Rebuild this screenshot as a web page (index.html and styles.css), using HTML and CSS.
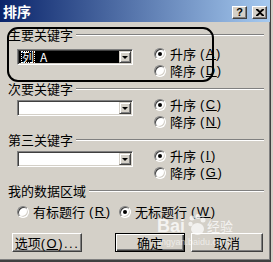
FILE: index.html
```html
<!DOCTYPE html>
<html lang="zh-CN">
<head>
    <meta charset="UTF-8">
    <title>排序</title>
    <link rel="stylesheet" href="styles.css">
</head>
<body>
    <div class="window">
        <div class="titlebar">
            <span class="title">排序</span>
            <div class="title-buttons">
                <span class="tbtn help">?</span>
                <span class="tbtn">
                    <svg width="8" height="7" viewBox="0 0 8 7"><path d="M0 0h2l2 2 2-2h2v1L5 3.5 8 6v1H6L4 5 2 7H0V6l3-2.5L0 1z" fill="#000"/></svg>
                </span>
            </div>
        </div>

        <div class="content">
            <div class="section first">
                <div class="head"><span>主要关键字</span><i class="line"></i></div>
                <div class="body">
                    <div class="combo selected">
                        <div class="field"><span class="focus">列</span>A</div>
                        <div class="drop"></div>
                    </div>
                    <div class="radios">
                        <div class="opt"><span class="radio checked"></span>升序<span class="key">(<u>A</u>)</span></div>
                        <div class="opt"><span class="radio"></span>降序<span class="key">(<u>D</u>)</span></div>
                    </div>
                </div>
            </div>

            <div class="section">
                <div class="head"><span>次要关键字</span><i class="line"></i></div>
                <div class="body">
                    <div class="combo">
                        <div class="field"></div>
                        <div class="drop"></div>
                    </div>
                    <div class="radios">
                        <div class="opt"><span class="radio checked"></span>升序<span class="key">(<u>C</u>)</span></div>
                        <div class="opt"><span class="radio"></span>降序<span class="key">(<u>N</u>)</span></div>
                    </div>
                </div>
            </div>

            <div class="section">
                <div class="head"><span>第三关键字</span><i class="line"></i></div>
                <div class="body">
                    <div class="combo">
                        <div class="field"></div>
                        <div class="drop"></div>
                    </div>
                    <div class="radios">
                        <div class="opt"><span class="radio checked"></span>升序<span class="key">(<u>I</u>)</span></div>
                        <div class="opt"><span class="radio"></span>降序<span class="key">(<u>G</u>)</span></div>
                    </div>
                </div>
            </div>

            <div class="section data">
                <div class="head"><span>我的数据区域</span><i class="line"></i></div>
                <div class="data-opts">
                    <div class="opt"><span class="radio"></span>有标题行<span class="key">(<u>R</u>)</span></div>
                    <div class="opt"><span class="radio checked"></span>无标题行<span class="key">(<u>W</u>)</span></div>
                </div>
            </div>

            <div class="actions">
                <button class="btn">选项<span class="key">(<u>O</u>)...</span></button>
                <button class="btn default">确定</button>
                <button class="btn">取消</button>
            </div>
        </div>

        <!-- hand-drawn ring around the first key -->
        <div class="ring"></div>

        <div class="mark">
            <span class="bai">Bai</span>
            <svg class="paw" width="18" height="22" viewBox="0 0 18 22">
                <circle cx="4" cy="4" r="2.5"/><circle cx="10" cy="2.5" r="2.5"/><circle cx="15" cy="6" r="2.5"/>
                <circle cx="2.5" cy="10" r="2.2"/><ellipse cx="9.5" cy="15" rx="6.5" ry="6"/>
            </svg>
            <span class="jy">经验</span>
            <span class="url">jingyan.baidu.com</span>
        </div>
    </div>
</body>
</html>
```

FILE: styles.css
```css
* { box-sizing: border-box; }
body { margin: 0; background: #d4d0c8; font-family: "Noto Sans CJK SC", sans-serif; font-size: 13px; color: #000; }

.window { position: relative; width: 271px; height: 262px; background: #d4d0c8; border-right: 1px solid #404040; border-bottom: 2px solid #404040; box-shadow: inset -1px -1px #808080; overflow: hidden; }

.titlebar { display: flex; justify-content: space-between; height: 22px; padding: 0 3px 0 3px; background: linear-gradient(to right, #0a246a, #a6caf0); }
.title { align-self: center; color: #fff; font-weight: bold; font-size: 14px; line-height: 14px; }
.title-buttons { display: flex; gap: 5px; align-self: flex-end; margin-bottom: 3px; }
.tbtn { display: flex; align-items: center; justify-content: center; width: 15px; height: 13px; background: #d4d0c8; border: 1px solid; border-color: #fff #404040 #404040 #fff; box-shadow: inset -1px -1px #808080; font-family: "Liberation Sans", sans-serif; font-weight: bold; font-size: 11px; line-height: 11px; }

.content { padding: 6px 6px 0 8px; }
.section + .section { margin-top: 3px; }
.head { display: flex; align-items: center; height: 13px; line-height: 13px; gap: 3px; }
.line { flex: 1; height: 2px; border-top: 1px solid #808080; border-bottom: 1px solid #fff; }

.body { display: flex; align-items: flex-start; margin-top: 1px; padding-left: 9px; }
.first .body { margin-top: 4px; }

.combo { display: flex; width: 116px; height: 16px; margin-top: 4px; padding: 1px; background: #fff; border: 1px solid; border-color: #808080 #fff #fff #808080; box-shadow: inset 1px 1px #404040, inset -1px -1px #d4d0c8; }
.field { flex: 1; padding-left: 2px; line-height: 12px; font-size: 12px; }
.selected .field { background: #000; color: #fff; }
.focus { display: inline-block; margin-right: 5px; outline: 1px dotted #fff; outline-offset: -1px; padding: 0 1px; }
.drop { position: relative; display: flex; align-items: center; justify-content: center; width: 12px; height: 12px; background: #d4d0c8; border: 1px solid; border-color: #d4d0c8 #404040 #404040 #d4d0c8; box-shadow: inset 1px 1px #fff, inset -1px -1px #808080; }
.drop::after { content: ""; border-left: 3px solid transparent; border-right: 3px solid transparent; border-top: 3px solid #000; }

.radios { display: flex; flex-direction: column; margin-left: 21px; }
.opt { display: flex; align-items: center; height: 17px; gap: 4px; white-space: nowrap; }
.radio { position: relative; width: 12px; height: 12px; border-radius: 50%; background: #fff; border: 1px solid; border-color: #808080 #fff #fff #808080; box-shadow: inset 1px 1px #404040, inset -1px -1px #d4d0c8; }
.radio.checked::after { content: ""; position: absolute; left: 3px; top: 3px; width: 4px; height: 4px; border-radius: 50%; background: #000; }
.key { font-family: "Liberation Sans", sans-serif; letter-spacing: 1.5px; }

.data { margin-top: 2px; }
.data-opts { display: flex; margin-top: 6px; padding-left: 9px; }
.data-opts .opt { width: 102px; }

.actions { display: flex; margin-top: 13px; padding-left: 4px; }
.btn { width: 70px; height: 19px; padding: 0; background: #d4d0c8; border: 1px solid; border-color: #fff #404040 #404040 #fff; box-shadow: inset -1px -1px #808080; font-family: "Noto Sans CJK SC", sans-serif; font-size: 13px; line-height: 15px; color: #000; }
.btn.default { margin-left: 33px; border-color: #000; box-shadow: inset 1px 1px #fff, inset -1px -1px #404040, inset -2px -2px #808080; }
.btn + .btn:not(.default) { margin-left: 6px; width: 72px; }

.ring { position: absolute; left: 7px; top: 27px; width: 207px; height: 55px; border: 2px solid #000; border-radius: 11px; }

.mark { position: absolute; left: 157px; top: 214px; width: 100px; height: 36px; color: rgba(255, 255, 255, 0.75); pointer-events: none; }
.bai { position: absolute; left: 0; top: 3px; font-family: "Liberation Sans", sans-serif; font-weight: bold; font-size: 18px; line-height: 18px; }
.paw { position: absolute; left: 31px; top: 0; fill: rgba(255, 255, 255, 0.7); }
.jy { position: absolute; left: 50px; top: 5px; font-size: 13px; line-height: 13px; }
.url { position: absolute; left: 0; top: 24px; font-family: "Liberation Sans", sans-serif; font-size: 9px; line-height: 9px; color: rgba(255, 255, 255, 0.6); }
```
